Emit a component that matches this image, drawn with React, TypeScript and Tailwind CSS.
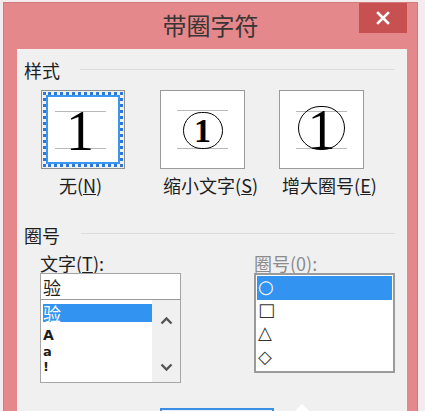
import React from "react";

const cjk = { fontFamily: '"Noto Sans CJK SC", "Noto Sans", sans-serif' };
const serif = { fontFamily: '"Liberation Serif", "DejaVu Serif", serif' };
const shapes = { fontFamily: '"DejaVu Sans", "Noto Sans CJK SC", sans-serif' };

function Chevron({ down }: { down?: boolean }) {
  return (
    <svg width="13" height="9" viewBox="0 0 13 9">
      <path
        d={down ? "M1.5 1.5 L6.5 6.5 L11.5 1.5" : "M1.5 7.5 L6.5 2.5 L11.5 7.5"}
        fill="none"
        stroke="#555"
        strokeWidth="2.4"
      />
    </svg>
  );
}

export default function App() {
  return (
    <div className="w-[425px] h-[411px] overflow-hidden bg-[#f4ecec] pl-[3px] pt-[2px]" style={cjk}>
      <div className="w-[415px] h-[430px] bg-[#e4888c] border border-[#cf7a7e] flex flex-col">
        {/* title bar */}
        <div className="h-[46px] flex items-start shrink-0">
          <div className="w-[58px]" />
          <div className="flex-1 h-[44px] flex items-center justify-center text-[24px] text-[#3a3535] leading-none">
            带圈字符
          </div>
          <div className="w-[48px] h-[30px] mr-[10px] bg-[#c75050] flex items-center justify-center">
            <svg width="14" height="14" viewBox="0 0 14 14">
              <path d="M2 2 L12 12 M12 2 L2 12" stroke="#fff" strokeWidth="2.6" strokeLinecap="square" />
            </svg>
          </div>
        </div>

        {/* content */}
        <div className="ml-[13px] w-[390px] flex-1 bg-[#f0f0f0] pl-[7px] pr-[12px] text-[#1e1e1e] text-[18px]">
          {/* 样式 header */}
          <div className="mt-[11px] h-[20px] flex items-center leading-none">
            <span>样式</span>
            <div className="flex-1 ml-[20px] h-px bg-[#dcdcdc] -mt-[2px]" />
          </div>

          {/* style boxes */}
          <div className="mt-[10px] ml-[17px] flex">
            {/* box 1 selected */}
            <div className="flex flex-col items-center w-[84px]">
              <div className="w-[84px] h-[79px] border border-[#8e8e8e] p-[1px]">
                <div className="w-full h-full border-[3px] border-dotted border-[#2c78d6]">
                  <div className="w-full h-full border-[2px] border-[#3b96f2] bg-white flex items-center justify-center">
                    <div className="w-[51px] h-[38px] border-y border-[#b9b9b9] flex items-center justify-center -ml-[6px]">
                      <span className="text-[56px] leading-none text-black mt-[2px]" style={serif}>1</span>
                    </div>
                  </div>
                </div>
              </div>
              <div className="mt-[6px] h-[20px] leading-[20px] whitespace-nowrap -ml-[5px]">
                无(<span className="underline">N</span>)
              </div>
            </div>

            {/* box 2 */}
            <div className="flex flex-col items-center w-[85px] ml-[35px]">
              <div className="w-[85px] h-[79px] border border-[#9a9a9a] bg-white flex items-center justify-center">
                <div className="w-[51px] h-[39px] border-y border-[#b9b9b9] flex items-center justify-center">
                  <div className="w-[40px] h-[37px] shrink-0 rounded-full border-[1.5px] border-black flex items-center justify-center mt-[1px]">
                    <span className="text-[34px] font-bold leading-none text-black mt-[1px]" style={serif}>1</span>
                  </div>
                </div>
              </div>
              <div className="mt-[6px] h-[20px] leading-[20px] whitespace-nowrap ml-[16px]">
                缩小文字(<span className="underline">S</span>)
              </div>
            </div>

            {/* box 3 */}
            <div className="flex flex-col items-center w-[85px] ml-[34px]">
              <div className="w-[85px] h-[79px] border border-[#9a9a9a] bg-white flex items-center justify-center">
                <div className="w-[51px] h-[38px] border-y border-[#b9b9b9] flex items-center justify-center">
                  <div className="w-[47px] h-[44px] shrink-0 rounded-full border-[1.5px] border-black flex items-center justify-center -mt-[4px]">
                    <span className="text-[56px] leading-none text-black mt-[4px]" style={serif}>1</span>
                  </div>
                </div>
              </div>
              <div className="mt-[6px] h-[20px] leading-[20px] whitespace-nowrap ml-[16px]">
                增大圈号(<span className="underline">E</span>)
              </div>
            </div>
          </div>

          {/* 圈号 header */}
          <div className="mt-[30px] h-[20px] flex items-center leading-none">
            <span>圈号</span>
            <div className="flex-1 ml-[21px] h-px bg-[#dcdcdc] -mt-[4px]" />
          </div>

          <div className="mt-[8px] ml-[16px] flex">
            {/* left column */}
            <div className="w-[141px] flex flex-col">
              <div className="h-[20px] leading-[20px] whitespace-nowrap">
                文字(<span className="underline">T</span>):
              </div>
              <div className="h-[27px] border border-[#a5a5a5] bg-white pl-[2px] flex items-center leading-none">
                验
              </div>
              <div className="h-[84px] border border-[#a5a5a5] border-t-[#9a9a9a] bg-white flex -mt-px">
                <div className="flex-1 pl-[2px] pt-[4px] flex flex-col">
                  <div className="h-[18px] bg-[#3393f0] text-white flex items-center leading-none">验</div>
                  <div className="h-[22px] flex items-end text-[14px] font-bold leading-[14px] pb-[2px]" style={shapes}>A</div>
                  <div className="h-[15px] flex items-center text-[13px] font-bold leading-[13px]" style={shapes}>a</div>
                  <div className="h-[15px] flex items-center text-[13px] font-bold leading-[13px]" style={shapes}>!</div>
                </div>
                <div className="w-[28px] bg-[#f0f0f0] flex flex-col items-center justify-between pt-[16px] pb-[10px]">
                  <Chevron />
                  <Chevron down />
                </div>
              </div>
            </div>

            {/* right column */}
            <div className="w-[141px] ml-[73px] flex flex-col">
              <div className="h-[20px] leading-[20px] whitespace-nowrap text-[#8c8c8c]">圈号(0):</div>
              <div className="h-[100px] border-2 border-[#9a9a9a] bg-white p-px flex flex-col">
                <div className="h-[24px] bg-[#3393f0] text-white pl-[1px] pt-[1px] text-[18px] leading-[20px]" style={shapes}>○</div>
                <div className="h-[24px] text-[#333] pl-[1px] text-[18px] leading-[20px]" style={shapes}>□</div>
                <div className="h-[24px] text-[#333] pl-[1px] text-[18px] leading-[20px]" style={shapes}>△</div>
                <div className="h-[24px] text-[#333] pl-[1px] text-[18px] leading-[20px]" style={shapes}>◇</div>
              </div>
            </div>
          </div>

          {/* bottom button edge */}
          <div className="mt-[25px] ml-[136px] flex items-start">
            <div className="w-[114px] h-[6px] border-t-2 border-x-2 border-[#3a8fe4] bg-[#e5f1fb]" />
            <svg width="20" height="10" viewBox="0 0 20 10" className="ml-[18px] -mt-[6px]">
              <path d="M2 10 L10 2 L18 10 Z" fill="#fff" />
            </svg>
          </div>
        </div>
      </div>
    </div>
  );
}
